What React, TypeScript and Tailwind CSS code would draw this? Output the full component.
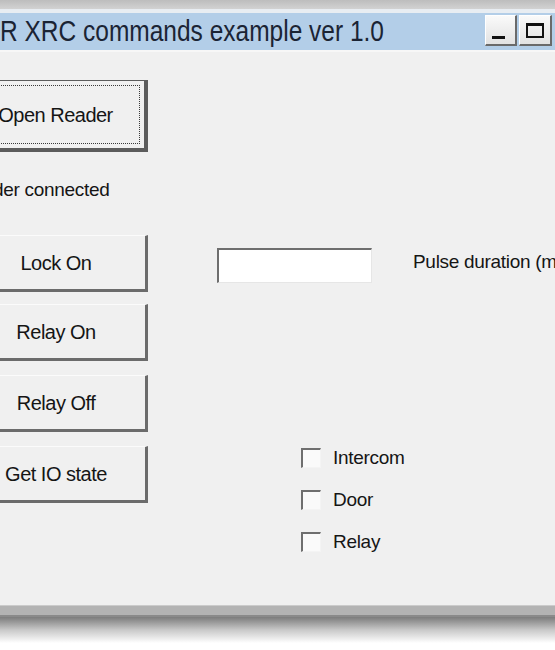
import type { ReactNode } from "react";

const font = "font-['Liberation_Sans',Arial,sans-serif]";

const WinButton = ({
  children,
  className = "",
}: {
  children: ReactNode;
  className?: string;
}) => (
  <button
    type="button"
    className={`flex items-center justify-center bg-[#f0f0f0] border-t border-l border-[#fbfbfb] border-r-[3px] border-b-[3px] border-r-[#6b6b6b] border-b-[#6b6b6b] text-[20px] tracking-[-0.5px] text-[#151515] ${className}`}
  >
    {children}
  </button>
);

const CheckRow = ({ label }: { label: string }) => (
  <label className="flex items-center gap-[12px] h-[20px]">
    <span className="w-[20px] h-[20px] bg-[#fafafa] border-t-2 border-l-2 border-[#6f6f6f] border-r border-b border-r-[#f4f4f4] border-b-[#f4f4f4]" />
    <span className="text-[19px] tracking-[-0.3px] text-[#151515]">{label}</span>
  </label>
);

const App = () => {
  return (
    <div className={`w-[555px] h-[650px] overflow-hidden bg-white ${font}`}>
      {/* frame above the title */}
      <div className="h-[9px] bg-linear-to-b from-[#bdbdbd] to-[#d2d2d2]" />
      <div className="h-[4px] bg-[#e8edf2]" />

      {/* TITLE BAR */}
      <div className="h-[37px] bg-[#b3cee8] flex items-start justify-between">
        <div className="h-full flex items-center">
          <span className="inline-block ml-[0px] text-[24.5px] leading-none text-[#1b2434] whitespace-nowrap scale-y-[1.22]">
            R XRC commands example ver 1.0
          </span>
        </div>

        <div className="flex gap-[2px] pt-[2px] pr-[3px]">
          <div className="w-[32px] h-[31px] bg-linear-to-b from-[#fafafa] to-[#e2e2e2] border-t border-l border-white border-r-2 border-b-2 border-r-[#6a6a6a] border-b-[#6a6a6a] flex items-end justify-center pb-[5px]">
            <div className="w-[13px] h-[3px] bg-[#111] ml-[-4px]" />
          </div>
          <div className="w-[33px] h-[31px] bg-linear-to-b from-[#fafafa] to-[#e2e2e2] border-t border-l border-white border-r-2 border-b-2 border-r-[#6a6a6a] border-b-[#6a6a6a] flex items-center justify-center">
            <div className="w-[18px] h-[15px] border-2 border-t-[3px] border-[#111]" />
          </div>
        </div>
      </div>
      <div className="h-[2px] bg-[#f7f7f7]" />

      {/* CLIENT AREA */}
      <div className="h-[553px] bg-[#f0f0f0] pt-[28px]">
        <button
          type="button"
          className="ml-[-34px] w-[182px] h-[72px] flex bg-[#f0f0f0] border border-[#5c5c5c] border-r-[4px] border-b-[4px] p-[4px] text-[20px] tracking-[-0.5px] text-[#151515]"
        >
          <span className="flex-1 flex items-center justify-center border border-dotted border-[#3a3a3a]">
            Open Reader
          </span>
        </button>

        <p className="mt-[27px] ml-[-41px] text-[19px] leading-[22px] tracking-[-0.3px] text-[#151515] whitespace-nowrap">
          Reader connected
        </p>

        <div className="mt-[34px] flex items-start">
          <WinButton className="ml-[-34px] w-[182px] h-[57px] shrink-0">
            Lock On
          </WinButton>
          <input
            className="ml-[69px] mt-[13px] w-[155px] h-[35px] shrink-0 bg-white border-t-2 border-l-2 border-[#6e6e6e] border-r border-b border-r-[#e6e6e6] border-b-[#e6e6e6] outline-none"
          />
          <span className="ml-[41px] mt-[16px] text-[19px] leading-[22px] tracking-[-0.3px] text-[#151515] whitespace-nowrap">
            Pulse duration (ms)
          </span>
        </div>

        <div className="mt-[12px] flex items-start">
          <div className="ml-[-34px] flex flex-col gap-[14px] shrink-0">
            <WinButton className="w-[182px] h-[57px]">Relay On</WinButton>
            <WinButton className="w-[182px] h-[57px]">Relay Off</WinButton>
            <WinButton className="w-[182px] h-[57px]">Get IO state</WinButton>
          </div>
          <div className="ml-[153px] pt-[144px] flex flex-col gap-[22px]">
            <CheckRow label="Intercom" />
            <CheckRow label="Door" />
            <CheckRow label="Relay" />
          </div>
        </div>
      </div>

      {/* bottom frame + shadow */}
      <div className="h-[12px] bg-[#b3b3b3] border-t border-t-[#cbcbcb] border-b-2 border-b-[#8a8a8a]" />
      <div className="h-[26px] bg-linear-to-b from-[#7c7c7c] via-[#c9c9c9] to-white" />
    </div>
  );
};

export default App;
